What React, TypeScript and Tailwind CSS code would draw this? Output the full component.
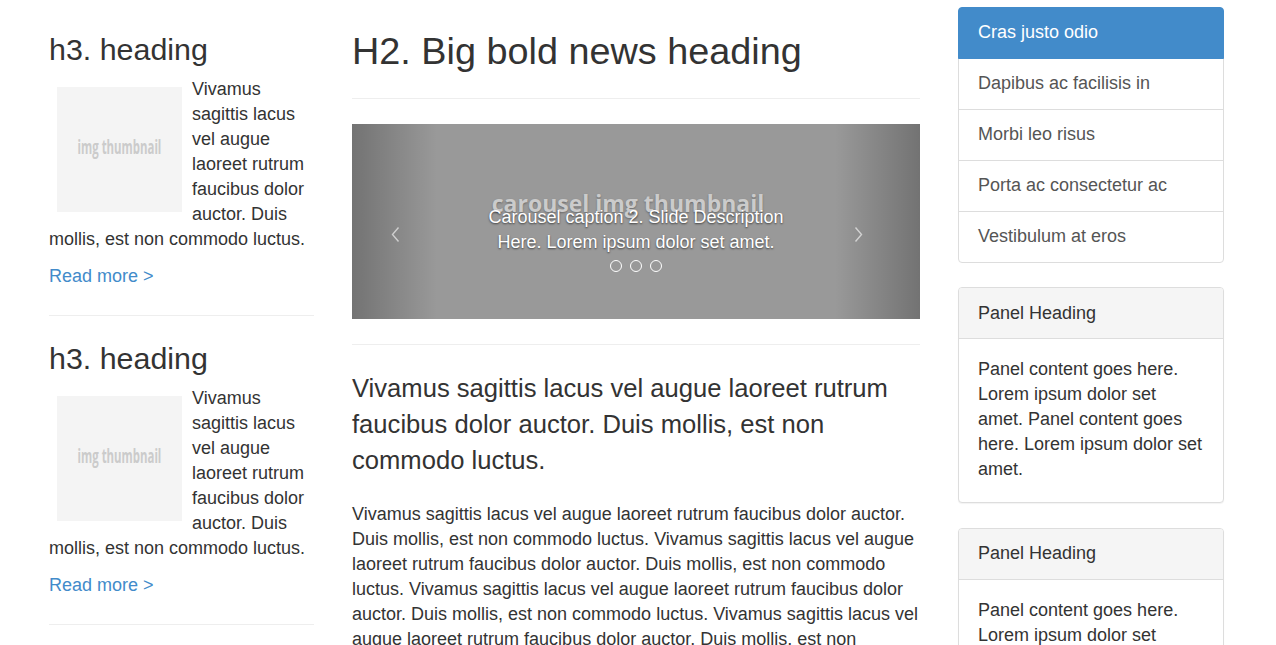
const listItems = [
  "Dapibus ac facilisis in",
  "Morbi leo risus",
  "Porta ac consectetur ac",
  "Vestibulum at eros",
];

const body =
  "Vivamus sagittis lacus vel augue laoreet rutrum faucibus dolor auctor. Duis mollis, est non commodo luctus.";

const Thumb = () => (
  <div className="float-left ml-[8px] mr-[10px] mt-[10px] mb-[5px] w-[125px] h-[125px] bg-[#f4f4f4] flex items-center justify-center overflow-hidden">
    <span className="inline-block whitespace-nowrap mb-[6px] font-['Open_Sans',sans-serif] font-bold text-[20px] leading-[24px] text-[#cbcbcb] scale-x-[0.57]">
      img thumbnail
    </span>
  </div>
);

const Teaser = () => (
  <div>
    <h3 className="text-[30.4px] leading-[33px] mb-[11px]">h3. heading</h3>
    <div className="mb-[12px]">
      <Thumb />
      {body}
    </div>
    <p className="mb-[26px]">
      <a href="#" className="text-[#428bca]">
        Read more &gt;
      </a>
    </p>
    <hr className="border-[#eee] mb-[26px]" />
  </div>
);

const Carousel = () => (
  <div className="relative h-[195px] bg-[#999] overflow-hidden">
    <div className="flex justify-center pt-[64px] pr-[16px]">
      <span className="whitespace-nowrap font-['Open_Sans',sans-serif] font-bold text-[23px] leading-[30px] text-[#cbcbcb] [text-shadow:0_1px_2px_rgba(0,0,0,0.3)]">
        carousel img thumbnail
      </span>
    </div>

    {/* left / right controls */}
    <div className="absolute inset-y-0 left-0 w-[15%] bg-linear-to-r from-black/25 to-transparent" />
    <div className="absolute inset-y-0 right-0 w-[15%] bg-linear-to-l from-black/25 to-transparent" />
    <svg className="absolute left-[39px] top-[102px]" width="9" height="17" viewBox="0 0 9 17">
      <polyline points="7.5,1.5 1.5,8.5 7.5,15.5" fill="none" stroke="rgba(255,255,255,0.6)" strokeWidth="1.4" />
    </svg>
    <svg className="absolute left-[502px] top-[102px]" width="9" height="17" viewBox="0 0 9 17">
      <polyline points="1.5,1.5 7.5,8.5 1.5,15.5" fill="none" stroke="rgba(255,255,255,0.6)" strokeWidth="1.4" />
    </svg>

    <div className="absolute left-[20%] right-[20%] top-[81px] text-center text-white [text-shadow:0_1px_2px_rgba(0,0,0,0.6)]">
      Carousel caption 2. Slide Description Here. Lorem ipsum dolor set amet.
    </div>
    <div className="absolute left-0 right-0 top-[136px] flex justify-center gap-[8px]">
      <span className="w-[12px] h-[12px] rounded-full border border-white" />
      <span className="w-[12px] h-[12px] rounded-full border border-white" />
      <span className="w-[12px] h-[12px] rounded-full border border-white" />
    </div>
  </div>
);

const Panel = () => (
  <div className="border border-[#ddd] rounded-[4px] bg-white mb-[25px] shadow-[0_1px_1px_rgba(0,0,0,0.05)] overflow-hidden">
    <div className="bg-[#f5f5f5] border-b border-[#ddd] px-[19px] py-[12.5px]">Panel Heading</div>
    <div className="px-[19px] pt-[18px] pb-[19.5px]">
      Panel content goes here. Lorem ipsum dolor set amet. Panel content goes here. Lorem ipsum dolor set amet.
    </div>
  </div>
);

export default function App() {
  return (
    <div className="min-h-screen bg-white text-[#333] text-[18px] leading-[25px] font-['Liberation_Sans',Arial,sans-serif]">
      <div className="flex gap-[38px] pl-[49px]">
        <aside className="w-[265px] shrink-0 pt-[33px]">
          <Teaser />
          <Teaser />
        </aside>

        <main className="w-[568px] shrink-0">
          <h2 className="text-[37.8px] leading-[41px] mt-[31px]">H2. Big bold news heading</h2>
          <hr className="border-[#eee] mt-[26px] mb-[25px]" />
          <Carousel />
          <hr className="border-[#eee] mt-[25px] mb-[25px]" />
          <p className="text-[25.6px] leading-[36px] mb-[24px]">{body}</p>
          <p>
            {body} {body} {body} {body} {body}
          </p>
        </main>

        <aside className="w-[266px] shrink-0 pt-[7px]">
          <div className="mb-[24px]">
            <div className="relative z-10 border border-[#428bca] bg-[#428bca] text-white rounded-t-[4px] px-[19px] pt-[12px] pb-[13px]">
              Cras justo odio
            </div>
            {listItems.map((t, i) => (
              <div
                key={t}
                className={
                  i === listItems.length - 1
                    ? "-mt-px border border-[#ddd] rounded-b-[4px] text-[#555] px-[19px] pt-[12px] pb-[13px]"
                    : "-mt-px border border-[#ddd] text-[#555] px-[19px] pt-[12px] pb-[13px]"
                }
              >
                {t}
              </div>
            ))}
          </div>
          <Panel />
          <Panel />
        </aside>
      </div>
    </div>
  );
}
